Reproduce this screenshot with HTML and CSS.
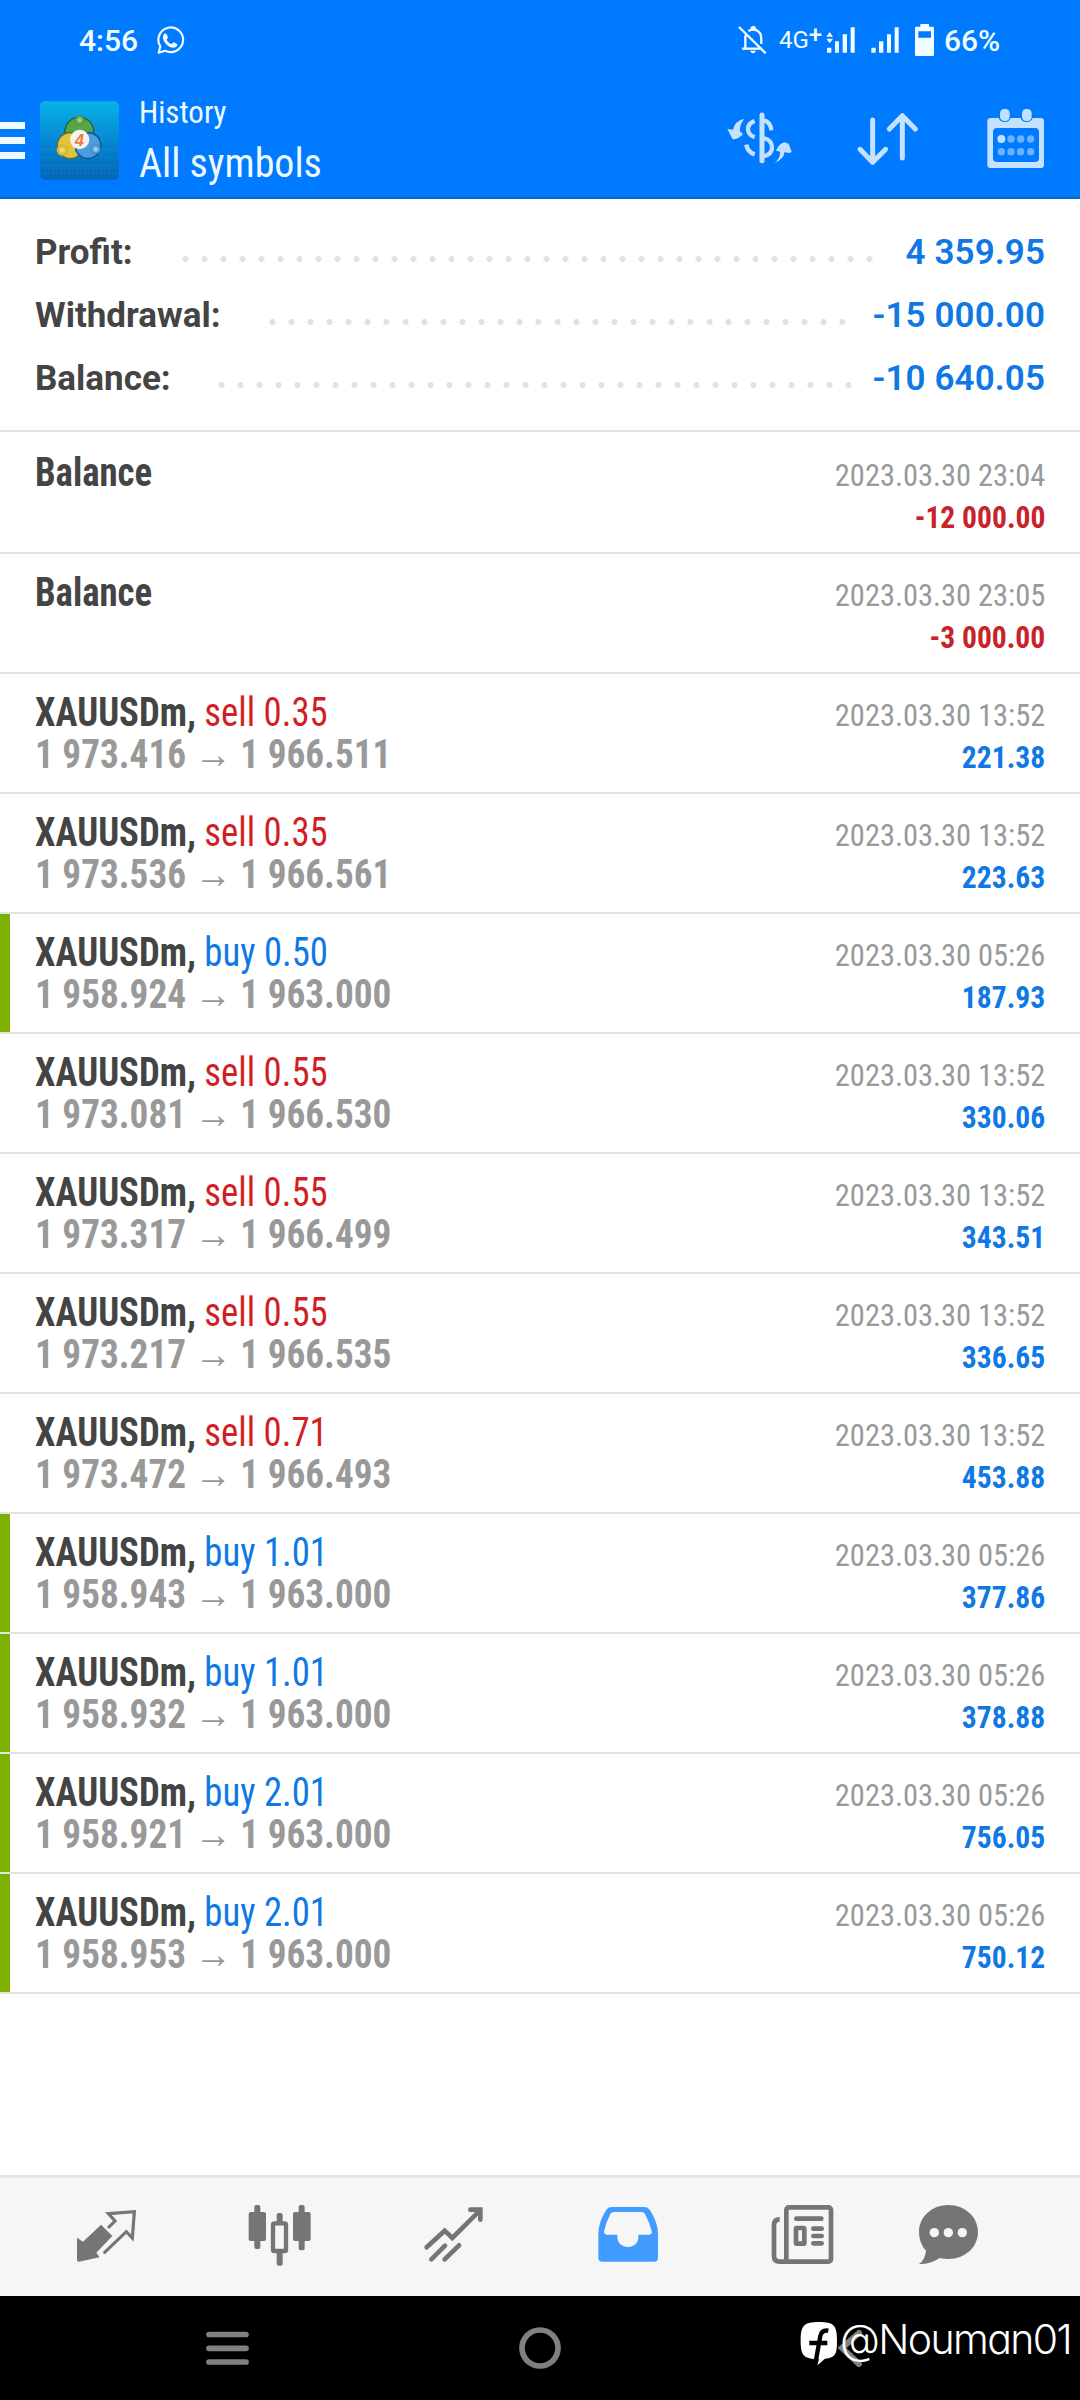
FILE: index.html
```html
<!DOCTYPE html>
<html lang="en">
<head>
<meta charset="utf-8">
<title>History</title>
<link rel="stylesheet" href="styles.css">
</head>
<body>
<header class="top">
  <div class="status">
    <span class="clock">4:56</span>
    <svg class="wa" viewBox="465 72 90 96"><path d="M473 158l5-19a37 37 0 1 1 14 13z" fill="none" stroke="currentColor" stroke-width="6.500" stroke-linejoin="round"/><path d="M488 103c5-4 9-2 10 2l3 7c0 3-4 5-4 8 3 6 8 10 14 12 4 0 5-5 8-5l9 5c3 2 0 8-4 10-20 8-46-22-36-39z" fill="currentColor"/></svg>
    <span class="grow"></span>
    <svg class="s30" viewBox="114 72 90 96"><g fill="none" stroke="currentColor" stroke-width="7"><path d="M117 81l80 79"/><path d="M126 146h58"/><path d="M136 146v-33q0-6 3-11M145 93q22-12 36 8 3 5 3 31"/></g><path d="M152 88v-6q8-9 16 0v6zM150 152h18q-9 16-18 0z" fill="currentColor"/></svg>
    <span class="net">4G<b>+</b></span>
    <svg class="s30 sig1" viewBox="378 72 90 96"><path d="M381 143h13v15h-13zM405 124h12v34h-12zM428 103h13v55h-13zM452 82h12v76h-12zM389 96l10 14h-20zM379 116h20l-10 14z" fill="currentColor"/></svg>
    <svg class="s30 sig2" viewBox="510 72 90 96"><path d="M514 143h13v15h-13zM537 124h13v34h-13zM561 103h12v55h-12zM584 82h12v76h-12z" fill="currentColor"/></svg>
    <svg class="batt" viewBox="642 72 63 96"><path fill-rule="evenodd" d="M661 72h26v8h11q4 0 4 4v80q0 4-4 4h-49q-4 0-4-4v-80q0-4 4-4h12zM655 94v19h38v-19z" fill="currentColor"/></svg>
    <span class="pct">66%</span>
  </div>
  <div class="bar">
    <svg class="menu" viewBox="0 0 25 38"><path d="M0 0h25v7H0zM0 15h25v7H0zM0 30h25v7H0z" fill="currentColor"/></svg>
    <svg class="app" viewBox="120 302 237 236">
      <defs>
        <linearGradient id="bg" x1="0" y1="0" x2="0" y2="1"><stop offset="0" stop-color="#06b2ea"/><stop offset=".55" stop-color="#0583cf"/><stop offset="1" stop-color="#0565b8"/></linearGradient>
        <radialGradient id="gr"><stop offset="0" stop-color="#b9dd9a"/><stop offset="1" stop-color="#3c8b35"/></radialGradient>
        <radialGradient id="ye"><stop offset="0" stop-color="#f6ea8a"/><stop offset="1" stop-color="#c9a820"/></radialGradient>
        <radialGradient id="bl"><stop offset="0" stop-color="#b5e0fa"/><stop offset="1" stop-color="#2c7fc6"/></radialGradient>
      </defs>
      <rect x="120" y="302" width="237" height="236" rx="15" fill="url(#bg)"/>
      <path d="M136 302v236M160 302v236M184 302v236M208 302v236M232 302v236M256 302v236M280 302v236M304 302v236M328 302v236M120 326h237M120 350h237M120 374h237M120 398h237M120 422h237M120 446h237M120 470h237M120 494h237M120 518h237" stroke="#5bd0f5" stroke-opacity=".15" stroke-width="2"/>
      <g stroke-width="4"><circle cx="238" cy="393" r="43" fill="#56a548" stroke="#1d5e3e"/><circle cx="211" cy="435" r="39" fill="#dfc53c" stroke="#5b6c35"/><path d="M239 415l26-19a39 39 0 1 1-38 52z" fill="#4b9ddb" stroke="#124f92"/></g>
      <circle cx="239" cy="359" r="15" fill="url(#gr)"/><circle cx="187" cy="449" r="17" fill="url(#ye)"/><circle cx="287" cy="446" r="15" fill="url(#bl)"/>
      <circle cx="239" cy="417" r="29" fill="#f3f4f0"/>
      <text x="238" y="436" class="four" text-anchor="middle">4</text>
    </svg>
    <div class="heads"><div class="h1"><span class="cond">History</span></div><div class="h2"><span class="cond">All symbols</span></div></div>
    <svg class="act a1" viewBox="75 318 216 192"><g fill="currentColor"><path d="M186 345v137" stroke="currentColor" stroke-width="15" stroke-linecap="round"/><g fill="none" stroke="currentColor" stroke-width="13"><path d="M164 363q-20 7-20 24t20 25"/><path d="M139 434q3 22 25 29"/><path d="M192 361q20 5 22 30" /><path d="M190 414q26 6 26 28t-26 27"/></g><path d="M133 356q-28 6-34 33l-17-2 16 31q16 1 31-15l-9-9q-2-20 13-38zM223 489q29-11 30-32l17 2 5-4-9-24-13-4q-16 4-25 25l12 3q2 20-17 34z"/></g></svg>
    <svg class="act a2" viewBox="459 318 216 192"><g fill="none" stroke="currentColor" stroke-width="15" stroke-linecap="round" stroke-linejoin="round"><path d="M518 360v127M480 448l38 39 39-39M607 474V347M568 387l39-40 39 40"/></g></svg>
    <svg class="act a3" viewBox="840 318 216 192"><path fill-rule="evenodd" fill="currentColor" d="M872 354h24q4 12 18 12t18-12h30q4 12 18 12t18-12h24q10 0 10 10v130q0 10-10 10h-150q-10 0-10-10v-130q0-10 10-10zM891 384q-12 0-12 12v78q0 12 12 12h114q12 0 12-12v-78q0-12-12-12z"/><g fill="currentColor"><rect x="900" y="327" width="29" height="36" rx="13"/><rect x="966" y="327" width="29" height="36" rx="13"/><circle cx="904" cy="417" r="12"/><g fill-opacity=".55"><circle cx="933" cy="417" r="11"/><circle cx="962" cy="417" r="11"/><circle cx="992" cy="417" r="11"/><circle cx="904" cy="455" r="11"/><circle cx="933" cy="455" r="11"/><circle cx="962" cy="455" r="11"/><circle cx="992" cy="455" r="11"/></g></g></svg>
  </div>
</header>
<section class="summary">
  <div class="sum"><span class="w1">Profit:</span><i class="dots d1"></i><b>4 359.95</b></div>
  <div class="sum"><span class="w2">Withdrawal:</span><i class="dots d2"></i><b>-15 000.00</b></div>
  <div class="sum"><span class="w3">Balance:</span><i class="dots d3"></i><b>-10 640.05</b></div>
</section>
<main class="list">
  <div class="row first"><div class="l"><div class="t"><span class="cond">Balance</span></div></div><div class="r"><div class="date"><span class="cond">2023.03.30 23:04</span></div><div class="amt neg"><span class="cond">-12 000.00</span></div></div></div>
  <div class="row"><div class="l"><div class="t"><span class="cond">Balance</span></div></div><div class="r"><div class="date"><span class="cond">2023.03.30 23:05</span></div><div class="amt neg"><span class="cond">-3 000.00</span></div></div></div>
  <div class="row"><div class="l"><div class="t"><span class="cond">XAUUSDm, <em class="sell">sell 0.35</em></span></div><div class="p"><span class="cond">1 973.416 <u>→</u> 1 966.511</span></div></div><div class="r"><div class="date"><span class="cond">2023.03.30 13:52</span></div><div class="amt"><span class="cond">221.38</span></div></div></div>
  <div class="row"><div class="l"><div class="t"><span class="cond">XAUUSDm, <em class="sell">sell 0.35</em></span></div><div class="p"><span class="cond">1 973.536 <u>→</u> 1 966.561</span></div></div><div class="r"><div class="date"><span class="cond">2023.03.30 13:52</span></div><div class="amt"><span class="cond">223.63</span></div></div></div>
  <div class="row tp"><div class="l"><div class="t"><span class="cond">XAUUSDm, <em class="buy">buy 0.50</em></span></div><div class="p"><span class="cond">1 958.924 <u>→</u> 1 963.000</span></div></div><div class="r"><div class="date"><span class="cond">2023.03.30 05:26</span></div><div class="amt"><span class="cond">187.93</span></div></div></div>
  <div class="row"><div class="l"><div class="t"><span class="cond">XAUUSDm, <em class="sell">sell 0.55</em></span></div><div class="p"><span class="cond">1 973.081 <u>→</u> 1 966.530</span></div></div><div class="r"><div class="date"><span class="cond">2023.03.30 13:52</span></div><div class="amt"><span class="cond">330.06</span></div></div></div>
  <div class="row"><div class="l"><div class="t"><span class="cond">XAUUSDm, <em class="sell">sell 0.55</em></span></div><div class="p"><span class="cond">1 973.317 <u>→</u> 1 966.499</span></div></div><div class="r"><div class="date"><span class="cond">2023.03.30 13:52</span></div><div class="amt"><span class="cond">343.51</span></div></div></div>
  <div class="row"><div class="l"><div class="t"><span class="cond">XAUUSDm, <em class="sell">sell 0.55</em></span></div><div class="p"><span class="cond">1 973.217 <u>→</u> 1 966.535</span></div></div><div class="r"><div class="date"><span class="cond">2023.03.30 13:52</span></div><div class="amt"><span class="cond">336.65</span></div></div></div>
  <div class="row"><div class="l"><div class="t"><span class="cond">XAUUSDm, <em class="sell">sell 0.71</em></span></div><div class="p"><span class="cond">1 973.472 <u>→</u> 1 966.493</span></div></div><div class="r"><div class="date"><span class="cond">2023.03.30 13:52</span></div><div class="amt"><span class="cond">453.88</span></div></div></div>
  <div class="row tp"><div class="l"><div class="t"><span class="cond">XAUUSDm, <em class="buy">buy 1.01</em></span></div><div class="p"><span class="cond">1 958.943 <u>→</u> 1 963.000</span></div></div><div class="r"><div class="date"><span class="cond">2023.03.30 05:26</span></div><div class="amt"><span class="cond">377.86</span></div></div></div>
  <div class="row tp"><div class="l"><div class="t"><span class="cond">XAUUSDm, <em class="buy">buy 1.01</em></span></div><div class="p"><span class="cond">1 958.932 <u>→</u> 1 963.000</span></div></div><div class="r"><div class="date"><span class="cond">2023.03.30 05:26</span></div><div class="amt"><span class="cond">378.88</span></div></div></div>
  <div class="row tp"><div class="l"><div class="t"><span class="cond">XAUUSDm, <em class="buy">buy 2.01</em></span></div><div class="p"><span class="cond">1 958.921 <u>→</u> 1 963.000</span></div></div><div class="r"><div class="date"><span class="cond">2023.03.30 05:26</span></div><div class="amt"><span class="cond">756.05</span></div></div></div>
  <div class="row tp"><div class="l"><div class="t"><span class="cond">XAUUSDm, <em class="buy">buy 2.01</em></span></div><div class="p"><span class="cond">1 958.953 <u>→</u> 1 963.000</span></div></div><div class="r"><div class="date"><span class="cond">2023.03.30 05:26</span></div><div class="amt"><span class="cond">750.12</span></div></div></div>
</main>
<nav class="tabs">
  <svg viewBox="90 117 216 216"><path fill="currentColor" d="M183 194l34 34-48 50 10 14-62 13q-6 0-6-6v-66l18 12z"/><path d="M207 201l18-18-20-22 78-6-6 79-18-19-65 62" fill="none" stroke="currentColor" stroke-width="9.500" stroke-linecap="round"/></svg>
  <svg viewBox="612 117 216 216"><g fill="currentColor"><rect x="626" y="156" width="52" height="87" rx="6"/><rect x="643" y="135" width="18" height="132" rx="6"/><rect x="759" y="156" width="53" height="87" rx="6"/><rect x="776" y="135" width="18" height="136" rx="6"/><rect x="710" y="159" width="18" height="36" rx="6"/><rect x="710" y="268" width="18" height="49" rx="6"/></g><rect x="699" y="190" width="39" height="83" rx="4" fill="none" stroke="currentColor" stroke-width="13"/></svg>
  <svg viewBox="1134 117 216 216"><path d="M1160 262l54-50 23 22 83-83M1291 149h30v30M1174 298l41-41M1214 298l43-42" fill="none" stroke="currentColor" stroke-width="14" stroke-linecap="round"/></svg>
  <svg class="on" viewBox="96 117 216 216"><path fill="currentColor" fill-rule="evenodd" d="M154 141h100q10 0 15 8 25 38 25 72v72q0 12-12 12H127q-12 0-12-12v-72q0-34 24-72 5-8 15-8zM162 156q-8 0-11 6-14 26-19 54 0 7 7 8h33v8c0 17 14 29 32 29s31-12 31-29v-8h34q7-1 7-8-7-28-21-54-3-6-11-6z"/></svg>
  <svg viewBox="618 117 216 216"><g fill="none" stroke="currentColor" stroke-width="14"><rect x="679" y="142" width="134" height="163" rx="8"/><path d="M659 178q-17 0-17 18v92q0 17 17 17h28"/><path d="M709 176h75M760 206h25M760 228h25M760 250h25" stroke-linecap="round"/><rect x="708" y="204" width="25" height="47" rx="3"/></g></svg>
  <svg class="last" viewBox="1056 117 216 216"><path fill="currentColor" d="M1165 135c50 0 89 36 89 81s-39 81-89 81q-14 0-26-3-28 19-62 18 18-12 21-40-21-22-21-56c0-45 38-81 88-81z"/><g fill="#f6f6f6"><circle cx="1123" cy="218" r="14"/><circle cx="1165" cy="218" r="14"/><circle cx="1207" cy="218" r="14"/></g></svg>
</nav>
<footer class="sys">
  <svg class="recent" viewBox="0 0 44 44"><path d="M3 8.500h37M3 22.300h37M3 36h37" stroke="currentColor" stroke-width="5.700" stroke-linecap="round"/></svg>
  <svg class="home" viewBox="0 0 44 44"><circle cx="22" cy="22" r="18" fill="none" stroke="currentColor" stroke-width="5.700"/></svg>
  <svg class="back" viewBox="0 0 26 44"><path d="M21 7L4 22l17 16" fill="none" stroke="currentColor" stroke-width="6" stroke-linecap="round"/></svg>
  <div class="mark"><svg viewBox="12 33 117 135"><path fill="#fff" d="M72 36c44 0 54 10 54 54 0 43-4 53-36 56L67 166l5-19C26 147 17 137 17 92 17 46 27 36 72 36z"/><path d="M100 62q-20-3-24 16L63 150M43 99h54" fill="none" stroke="#000" stroke-width="13"/></svg><span>@Nouman01</span></div>
</footer>
</body>
</html>
```
FILE: styles.css
```css
*{box-sizing:border-box}
body{margin:0;width:1080px;height:2400px;background:#fff;font-family:Roboto,"Liberation Sans",sans-serif;display:flex;flex-direction:column;overflow:hidden}
svg{display:block;flex:none}
.cond{display:inline-block;white-space:pre;font-family:"Roboto Condensed",Roboto,sans-serif;font-stretch:75%}
.top{height:199px;background:#007aff;border-bottom:2px solid #0b6ac4;color:#eefaff}
.status{height:80px;padding:0 80px 0 79px;display:flex;align-items:center;font-size:30px;font-weight:500;color:#f0fcff}
.wa{width:30px;height:32px;margin-left:18px}
.grow{flex:1}
.s30{width:30px;height:32px}
.net{font-size:24px;font-weight:400;margin-left:11px;width:40px;display:flex;align-items:center}
.net b{font-weight:500;line-height:1;margin-top:-10px}
.sig1{margin-left:7px}
.sig2{margin-left:14px}
.batt{width:21px;height:32px;margin:0 9px 0 14px}
.pct{width:56px}
.bar{height:117px;display:flex;align-items:flex-start}
.menu{width:25px;height:38px;margin-top:42px}
.app{width:79px;height:79px;margin:21px 0 0 15px}
.four{font:italic bold 50px "Liberation Sans",sans-serif;fill:#ee7b42}
.heads{width:541px;margin-left:20px;padding-top:14px;white-space:nowrap}
.h1{font-size:31px;line-height:38px}
.h2{font-size:40px;line-height:48px;margin-top:8px}
.act{width:72px;height:64px;margin-top:26px;color:#c4e2ff}
.a1{margin-left:45px}
.a2{margin-left:56px}
.a3{margin-left:55px}
.summary{height:233px;border-bottom:2px solid #e2e2e2;padding:22px 35px 0;font-size:35px;color:#444}
.sum{height:63px;display:flex;align-items:center;font-weight:700}
.sum b{color:#0f78e4;margin-left:auto;font-weight:600;letter-spacing:.1px}
.dots{height:6px;margin-top:12px;background:radial-gradient(circle at 9.5px 3px,#e2e2e2 2.700px,transparent 3.400px) 0 0/19px 6px repeat-x}
.w1{width:141px}
.w2{width:228px}
.w3{width:177px}
.d1{width:703px}
.d2{width:589px}
.d3{width:646px}
.row{height:120px;border-bottom:2px solid #e2e2e2;padding:18px 35px 0;display:flex;justify-content:space-between}
.first{height:122px;padding-top:20px}
.tp{box-shadow:inset 10px 0 #7eb000}
.t,.p{font-size:40px;line-height:42px;height:42px;font-weight:700;color:#444}
.t .cond,.p .cond{transform:scaleX(.918);transform-origin:0 0}
.p{color:#999}
.p .cond{transform:scaleX(.93)}
.t em{font-style:normal;font-weight:400}
.p u{text-decoration:none;font-weight:400}
.sell{color:#d01f25}
.buy{color:#0f78e4}
.r{text-align:right;padding-top:2px}
.date,.amt{font-size:32px;line-height:42px;height:42px;color:#999}
.date .cond{transform:scaleX(.951);transform-origin:100% 0}
.amt{font-weight:700;color:#0f78e4}
.amt .cond{transform:scaleX(.924);transform-origin:100% 0}
.amt.neg{color:#c8222a}
.tabs{margin-top:auto;height:121px;border-top:3px solid #e4e4e4;background:#f6f6f6;color:#757575;display:flex;gap:102px;padding:21px 0 0 70px}
.tabs svg{width:72px;height:72px}
.tabs .on{color:#429bff}
.tabs .last{margin-left:-28px}
.sys{height:104px;background:#000;color:#808080;display:flex;align-items:center;position:relative}
.recent{width:44px;height:44px;margin-left:206px}
.home{width:44px;height:44px;margin-left:268px}
.back{width:26px;height:44px;margin-left:276px}
.mark{position:absolute;left:799px;top:20px;display:flex;color:#fff;font:300 41px/50px Inter,sans-serif;font-feature-settings:"cv11"}
.mark svg{width:39px;height:45px;margin:5px 2px 0 0}
.mark span{margin-top:-2px;letter-spacing:-1.6px}
```
